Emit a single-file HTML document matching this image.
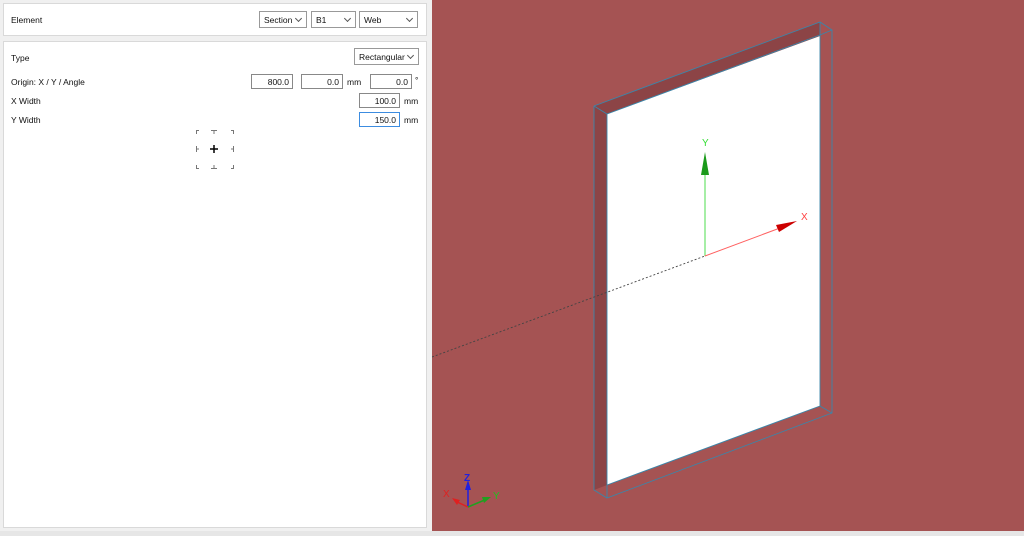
<!DOCTYPE html>
<html><head><style>
*{box-sizing:border-box;margin:0;padding:0}
body{width:1024px;height:536px;background:#f0f0f0;font-family:"Liberation Sans",sans-serif;font-size:8.5px;color:#111;position:relative;overflow:hidden}
.p{position:absolute;background:#fff;border:1px solid #d9d9d9}
.a{position:absolute}
.sel{position:absolute;height:17px;border:1px solid #999;background:#fff;padding:3px 4px;font-size:8.5px}
.sel:after{content:"";position:absolute;right:5px;top:4px;width:4px;height:4px;border-right:1px solid #555;border-bottom:1px solid #555;transform:rotate(45deg)}
.in{position:absolute;height:15px;border:1px solid #888;background:#fff;text-align:right;padding:2px 3px;font-size:8.5px}
.u{position:absolute;font-size:8.5px}
</style></head><body>
<div class="p" style="left:3px;top:3px;width:424px;height:33px"></div>
<div class="a" style="left:11px;top:15px">Element</div>
<div class="sel" style="left:259px;top:11px;width:48px">Section</div>
<div class="sel" style="left:311px;top:11px;width:45px">B1</div>
<div class="sel" style="left:359px;top:11px;width:59px">Web</div>
<div class="p" style="left:3px;top:41px;width:424px;height:487px"></div>
<div class="a" style="left:11px;top:53px">Type</div>
<div class="sel" style="left:354px;top:48px;width:65px">Rectangular</div>
<div class="a" style="left:11px;top:77px">Origin: X / Y / Angle</div>
<div class="in" style="left:251px;top:74px;width:42px">800.0</div>
<div class="in" style="left:301px;top:74px;width:42px">0.0</div>
<div class="u" style="left:347px;top:77px">mm</div>
<div class="in" style="left:370px;top:74px;width:42px">0.0</div>
<div class="u" style="left:415px;top:75px">°</div>
<div class="a" style="left:11px;top:96px">X Width</div>
<div class="in" style="left:359px;top:93px;width:41px">100.0</div>
<div class="u" style="left:404px;top:96px">mm</div>
<div class="a" style="left:11px;top:115px">Y Width</div>
<div class="in" style="left:359px;top:112px;width:41px;border-color:#3c8ce0">150.0</div>
<div class="u" style="left:404px;top:115px">mm</div>
<svg class="a" style="left:190px;top:125px" width="50" height="50" viewBox="190 125 50 50">
<g stroke="#777" stroke-width="1" fill="none">
<polyline points="196.5,134 196.5,130.5 199,130.5"/>
<line x1="211" y1="130.5" x2="217" y2="130.5"/><line x1="214" y1="130.5" x2="214" y2="134"/>
<polyline points="231,130.5 233.5,130.5 233.5,134"/>
<line x1="196.5" y1="146" x2="196.5" y2="152"/><line x1="196.5" y1="149" x2="199" y2="149"/>
<line x1="233.5" y1="146" x2="233.5" y2="152"/><line x1="233.5" y1="149" x2="231" y2="149"/>
<polyline points="196.5,165 196.5,168.5 199,168.5"/>
<line x1="211" y1="168.5" x2="217" y2="168.5"/><line x1="214" y1="168.5" x2="214" y2="165"/>
<polyline points="231,168.5 233.5,168.5 233.5,165"/>
</g>
<path d="M210 149h8M214 145v8" stroke="#000" stroke-width="1.5"/>
</svg>
<div class="a" style="left:428px;top:0;width:4px;height:531px;background:#f0f0f0"></div>
<svg class="a" style="left:432px;top:0" width="592" height="531" viewBox="432 0 592 531">
<rect x="432" y="0" width="592" height="531" fill="#a55353"/>
<polygon points="594,106 820,22 820,36 607,114" fill="#8c4446"/>
<polygon points="594,106 607,114 607,485 594,490" fill="#8c4446"/>
<polygon points="607,114 820,36 820,406 607,485" fill="#fff"/>
<g stroke="#3a86aa" stroke-width="0.9" fill="none">
<polyline points="594,106 820,22 832,30 832,413 607,498 594,490 594,106"/>
<line x1="594" y1="106" x2="607" y2="114"/><line x1="607" y1="114" x2="607" y2="498"/>
<line x1="820" y1="22" x2="820" y2="406"/><line x1="607" y1="114" x2="820" y2="35"/>
<line x1="820" y1="406" x2="832" y2="413"/><line x1="820" y1="35" x2="832" y2="30"/>
<line x1="607" y1="485" x2="820" y2="406"/>
</g>
<line x1="432" y1="357" x2="705" y2="256" stroke="#444" stroke-dasharray="2,2" stroke-width="0.9"/>
<line x1="705" y1="256" x2="705" y2="170" stroke="#4ddc4d"/>
<polygon points="705,152 701,175 709,175" fill="#1a9a1a"/>
<line x1="705" y1="256" x2="780" y2="228" stroke="#ff6060"/>
<polygon points="797,221 776,225 779,232" fill="#c00"/>
<text x="702" y="146" font-size="10" fill="#33dd33" font-family="Liberation Sans">Y</text>
<text x="801" y="220" font-size="10" fill="#ff4040" font-family="Liberation Sans">X</text>
<line x1="468" y1="507" x2="468" y2="485" stroke="#2020e0" stroke-width="1.5"/>
<polygon points="468,480 465,490 471,490" fill="#2020e0"/>
<line x1="468" y1="507" x2="455" y2="501" stroke="#e02020" stroke-width="1.5"/>
<polygon points="452,498 460,500 457,505" fill="#e02020"/>
<line x1="468" y1="507" x2="487" y2="499" stroke="#20a020" stroke-width="1.5"/>
<polygon points="491,497 482,497 484,503" fill="#20a020"/>
<text x="464" y="481" font-size="10" font-weight="bold" fill="#2020e0" font-family="Liberation Sans">Z</text>
<text x="443" y="497" font-size="10" fill="#e02020" font-family="Liberation Sans">X</text>
<text x="493" y="499" font-size="10" fill="#20c020" font-family="Liberation Sans">Y</text>
</svg>
<div class="a" style="left:0;top:531px;width:1024px;height:5px;background:#e6e6e6"></div>
</body></html>
